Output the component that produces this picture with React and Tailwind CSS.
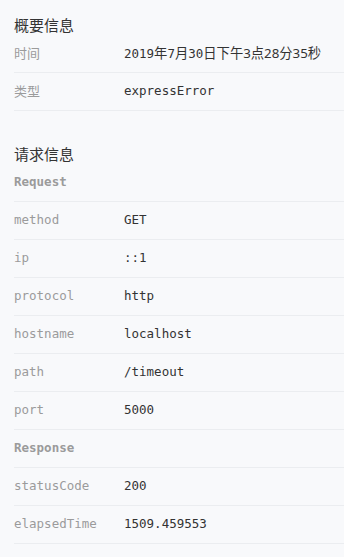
const mono = "font-['DejaVu_Sans_Mono','Liberation_Mono','Noto_Sans_CJK_SC',monospace]";
const sans = "font-['Noto_Sans','Noto_Sans_CJK_SC',sans-serif]";

function Row({ label, value, cjkLabel, heading }) {
  return (
    <div className="flex h-[38px] items-center border-b border-[#ebedf0]">
      <div
        className={
          "w-[110px] shrink-0 text-[#9b9b9b] " +
          (cjkLabel ? sans + " text-[13px]" : mono + " text-[12.5px]") +
          (heading ? " font-bold" : "")
        }
      >
        {label}
      </div>
      {value !== undefined && (
        <div className={mono + " text-[12.5px] text-[#333]"}>{value}</div>
      )}
    </div>
  );
}

export default function App() {
  const c = sans + " text-[13.3px]";
  return (
    <div className="min-h-[557px] bg-[#f8f9fb] pl-[14px] pt-[15px] pb-[12px]">
      <div className={sans + " h-[20px] text-[15px] leading-[20px] text-[#333]"}>概要信息</div>
      <Row
        label="时间"
        cjkLabel
        value={
          <span>
            2019<span className={c}>年</span>7<span className={c}>月</span>30
            <span className={c}>日下午3点28分35秒</span>
          </span>
        }
      />
      <Row label="类型" cjkLabel value="expressError" />

      <div className={sans + " mt-[33px] h-[20px] text-[15px] leading-[20px] text-[#333]"}>请求信息</div>
      <Row label="Request" heading />
      <Row label="method" value="GET" />
      <Row label="ip" value="::1" />
      <Row label="protocol" value="http" />
      <Row label="hostname" value="localhost" />
      <Row label="path" value="/timeout" />
      <Row label="port" value="5000" />
      <Row label="Response" heading />
      <Row label="statusCode" value="200" />
      <Row label="elapsedTime" value="1509.459553" />
    </div>
  );
}
